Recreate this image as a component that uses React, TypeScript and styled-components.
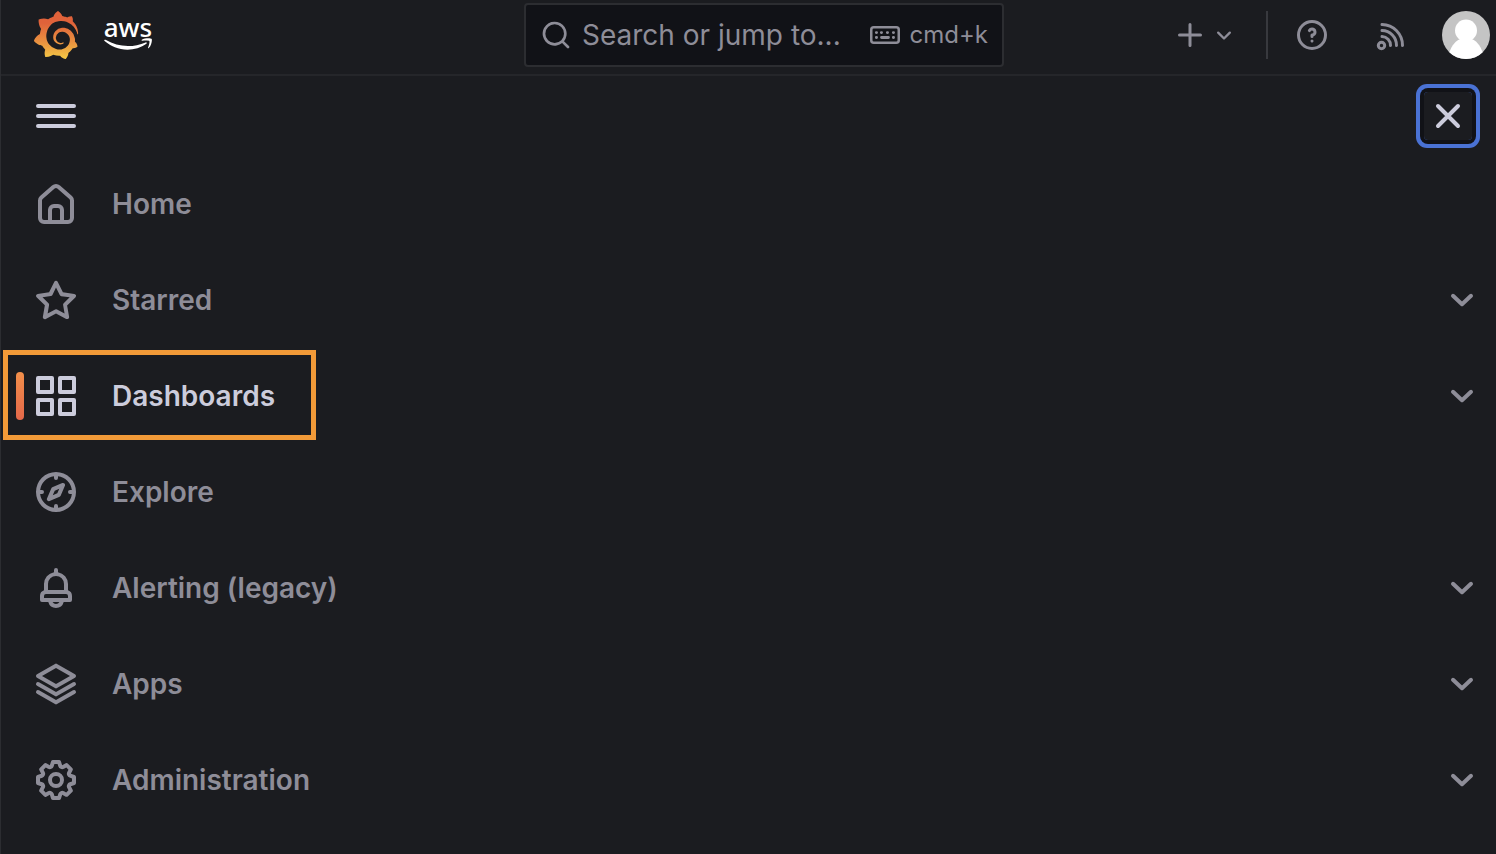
import React from "react";
import styled, { createGlobalStyle, css } from "styled-components";
import { SiGrafana } from "react-icons/si";

const colors = {
  canvas: "#111217",
  panel: "#1b1c20",
  border: "#2c2d31",
  text: "#8e8d98",
  strong: "#ccccdc",
  focus: "#4a72d4",
  marker: "#f29a38",
};

const GlobalStyle = createGlobalStyle`
  *, *::before, *::after { box-sizing: border-box; }
  body {
    margin: 0;
    background: ${colors.panel};
    color: ${colors.text};
    font-family: Inter, "Liberation Sans", sans-serif;
    font-size: 28px;
    line-height: 44px;
  }
  button, input { font: inherit; color: inherit; }
`;

const Page = styled.div`
  min-height: 100vh;
  border-left: 1px solid ${colors.border};
`;

const TopBar = styled.header`
  display: grid;
  grid-template-columns: minmax(0, 1fr) minmax(0, 480px) minmax(0, 1fr);
  align-items: center;
  padding: 3px 0 7px 31px;
  border-bottom: 2px solid #25262a;
`;

const Brand = styled.div`
  display: flex;
  align-items: center;
  gap: 24px;
`;

const LogoLink = styled.a`
  display: flex;
  color: inherit;
  text-decoration: none;
`;

const AwsLogo = styled.a`
  display: flex;
  flex-direction: column;
  align-items: center;
  width: 48px;
  padding-bottom: 4px;
  color: #fff;
  text-decoration: none;
  font-family: "Noto Sans", "Open Sans", sans-serif;
  font-size: 26px;
  font-weight: 500;
  line-height: 22px;
`;

const SearchBox = styled.label`
  display: flex;
  align-items: center;
  height: 64px;
  padding: 0 14px;
  border: 2px solid ${colors.border};
  border-radius: 4px;
  background: ${colors.canvas};
`;

const SearchInput = styled.input`
  flex: 1;
  min-width: 0;
  margin-left: 10px;
  padding: 0;
  border: 0;
  outline: 0;
  background: transparent;
  &::placeholder { color: ${colors.text}; opacity: 1; }
`;

const Shortcut = styled.span`
  display: flex;
  align-items: center;
  gap: 10px;
  font-size: 24px;
`;

const Actions = styled.div`
  display: flex;
  align-items: center;
  justify-content: flex-end;
  padding-right: 6px;
`;

const plainButton = css`
  display: flex;
  align-items: center;
  justify-content: center;
  padding: 0;
  border: 0;
  background: transparent;
  cursor: pointer;
`;

const ActionButton = styled.button<{ $after: number }>`
  ${plainButton}
  gap: 2px;
  margin-right: ${(p) => p.$after}px;
`;

const Divider = styled.span`
  width: 2px;
  height: 48px;
  margin-right: 26px;
  background: #38393e;
`;

const Avatar = styled.svg`
  display: block;
  width: 48px;
  height: 48px;
  border-radius: 50%;
`;

const MenuHeader = styled.div`
  display: flex;
  align-items: center;
  justify-content: space-between;
  padding: 16px 24px 16px 31px;
`;

const MenuButton = styled.button`
  ${plainButton}
  width: 48px;
  height: 48px;
  color: ${colors.strong};
`;

const CloseButton = styled(MenuButton)`
  border-radius: 4px;
  outline: none;
  box-shadow: 0 0 0 4px ${colors.canvas}, 0 0 0 8px ${colors.focus};
`;

const NavList = styled.ul`
  margin: 0;
  padding: 0;
  list-style: none;
`;

const NavItem = styled.li`
  position: relative;
  display: flex;
  align-items: center;
  justify-content: space-between;
  height: 96px;
  padding: 0 10px 0 31px;
`;

const NavLink = styled.a<{ $active?: boolean }>`
  display: flex;
  align-items: center;
  gap: 32px;
  color: ${(p) => (p.$active ? colors.strong : colors.text)};
  font-weight: 600;
  text-decoration: none;
`;

const ActiveBar = styled.span`
  position: absolute;
  left: 15px;
  top: 24px;
  width: 8px;
  height: 48px;
  border-radius: 4px;
  background: linear-gradient(#f28f4a, #e4684a);
`;

const Marker = styled.span`
  position: absolute;
  left: 2px;
  top: 2px;
  width: 313px;
  height: 90px;
  border: 5px solid ${colors.marker};
  pointer-events: none;
`;

const ExpandButton = styled.button`
  ${plainButton}
  width: 48px;
  height: 48px;
`;

const paths = {
  home: "M20,8h0L14,2.74a3,3,0,0,0-4,0L4,8a3,3,0,0,0-1,2.26V19a3,3,0,0,0,3,3H18a3,3,0,0,0,3-3V10.25A3,3,0,0,0,20,8ZM14,20H10V15a1,1,0,0,1,1-1h2a1,1,0,0,1,1,1Zm5-1a1,1,0,0,1-1,1H16V15a3,3,0,0,0-3-3H11a3,3,0,0,0-3,3v5H6a1,1,0,0,1-1-1V10.25a1,1,0,0,1,.34-.75l6-5.25a1,1,0,0,1,1.32,0l6,5.25a1,1,0,0,1,.34.75Z",
  star: "M22,9.67A1,1,0,0,0,21.14,9l-5.69-.83L12.9,3a1,1,0,0,0-1.8,0L8.55,8.16,2.86,9a1,1,0,0,0-.81.68,1,1,0,0,0,.25,1l4.13,4-1,5.68A1,1,0,0,0,6.9,21.44L12,18.77l5.1,2.67a.93.93,0,0,0,.46.12,1,1,0,0,0,.59-.19,1,1,0,0,0,.4-1l-1-5.68,4.13-4A1,1,0,0,0,22,9.67Zm-6.15,4a1,1,0,0,0-.29.88l.72,4.2-3.76-2a1.06,1.06,0,0,0-.94,0l-3.76,2,.72-4.2a1,1,0,0,0-.29-.88l-3-3,4.21-.61a1,1,0,0,0,.76-.55L12,5.7l1.88,3.82a1,1,0,0,0,.76.55l4.21.61Z",
  apps: "M10,13H3a1,1,0,0,0-1,1v7a1,1,0,0,0,1,1h7a1,1,0,0,0,1-1V14A1,1,0,0,0,10,13ZM9,20H4V15H9ZM21,2H14a1,1,0,0,0-1,1v7a1,1,0,0,0,1,1h7a1,1,0,0,0,1-1V3A1,1,0,0,0,21,2ZM20,9H15V4h5Zm1,4H14a1,1,0,0,0-1,1v7a1,1,0,0,0,1,1h7a1,1,0,0,0,1-1V14A1,1,0,0,0,21,13Zm-1,7H15V15h5ZM10,2H3A1,1,0,0,0,2,3v7a1,1,0,0,0,1,1h7a1,1,0,0,0,1-1V3A1,1,0,0,0,10,2ZM9,9H4V4H9Z",
  compass: "M12,2A10,10,0,1,0,22,12,10,10,0,0,0,12,2Zm1,17.93V19a1,1,0,0,0-2,0v.93A8,8,0,0,1,4.07,13H5a1,1,0,0,0,0-2H4.07A8,8,0,0,1,11,4.07V5a1,1,0,0,0,2,0V4.07A8,8,0,0,1,19.93,11H19a1,1,0,0,0,0,2h.93A8,8,0,0,1,13,19.93ZM15.14,7.55l-5,2.12a1,1,0,0,0-.52.52l-2.12,5a1,1,0,0,0,.21,1.1,1,1,0,0,0,.7.29.93.93,0,0,0,.4-.08l5-2.12a1,1,0,0,0,.52-.52l2.12-5a1,1,0,0,0-1.31-1.31Zm-2.49,5.1-2.28,1,1-2.28,2.28-1Z",
  bell: "M18,13.18V10a6,6,0,0,0-5-5.91V3a1,1,0,0,0-2,0V4.09A6,6,0,0,0,6,10v3.18A3,3,0,0,0,4,16v2a1,1,0,0,0,1,1H8.14a4,4,0,0,0,7.72,0H19a1,1,0,0,0,1-1V16A3,3,0,0,0,18,13.18ZM8,10a4,4,0,0,1,8,0v3H8Zm4,10a2,2,0,0,1-1.72-1h3.44A2,2,0,0,1,12,20Zm6-3H6V16a1,1,0,0,1,1-1H17a1,1,0,0,1,1,1Z",
  layers: "M2.5,8.86l9,5.2a1,1,0,0,0,1,0l9-5.2A1,1,0,0,0,22,8a1,1,0,0,0-.5-.87l-9-5.19a1,1,0,0,0-1,0l-9,5.19A1,1,0,0,0,2,8,1,1,0,0,0,2.5,8.86ZM12,4l7,4-7,4L5,8Zm8.5,7.17L12,16,3.5,11.13a1,1,0,0,0-1.37.37,1,1,0,0,0,.37,1.36l9,5.2a1,1,0,0,0,1,0l9-5.2a1,1,0,0,0,.37-1.36A1,1,0,0,0,20.5,11.13Zm0,4L12,20,3.5,15.13a1,1,0,0,0-1.37.37,1,1,0,0,0,.37,1.36l9,5.2a1,1,0,0,0,1,0l9-5.2a1,1,0,0,0,.37-1.36A1,1,0,0,0,20.5,15.13Z",
  cog: "M21.32,9.55l-1.89-.63.89-1.78A1,1,0,0,0,20.13,6L18,3.87a1,1,0,0,0-1.15-.19l-1.78.89-.63-1.89A1,1,0,0,0,13.5,2h-3a1,1,0,0,0-.95.68L8.92,4.57,7.14,3.68A1,1,0,0,0,6,3.87L3.87,6a1,1,0,0,0-.19,1.15l.89,1.78-1.89.63A1,1,0,0,0,2,10.5v3a1,1,0,0,0,.68.95l1.89.63-.89,1.78A1,1,0,0,0,3.87,18L6,20.13a1,1,0,0,0,1.15.19l1.78-.89.63,1.89a1,1,0,0,0,.95.68h3a1,1,0,0,0,.95-.68l.63-1.89,1.78.89A1,1,0,0,0,18,20.13L20.13,18a1,1,0,0,0,.19-1.15l-.89-1.78,1.89-.63A1,1,0,0,0,22,13.5v-3A1,1,0,0,0,21.32,9.55ZM20,12.78l-1.2.4A2,2,0,0,0,17.64,16l.57,1.14-1.1,1.1L16,17.64a2,2,0,0,0-2.79,1.16l-.4,1.2H11.22l-.4-1.2A2,2,0,0,0,8,17.64l-1.14.57-1.1-1.1L6.36,16A2,2,0,0,0,5.2,13.18L4,12.78V11.22l1.2-.4A2,2,0,0,0,6.36,8L5.79,6.89l1.1-1.1L8,6.36A2,2,0,0,0,10.82,5.2l.4-1.2h1.56l.4,1.2A2,2,0,0,0,16,6.36l1.14-.57,1.1,1.1L17.64,8a2,2,0,0,0,1.16,2.79l1.2.4ZM12,8a4,4,0,1,0,4,4A4,4,0,0,0,12,8Zm0,6a2,2,0,1,1,2-2A2,2,0,0,1,12,14Z",
  search: "M21.71,20.29,18,16.61A9,9,0,1,0,16.61,18l3.68,3.68a1,1,0,0,0,1.42,0A1,1,0,0,0,21.71,20.29ZM11,18a7,7,0,1,1,7-7A7,7,0,0,1,11,18Z",
  help: "M11.29,15.29a1.58,1.58,0,0,0-.12.15.76.76,0,0,0-.09.18.64.64,0,0,0-.06.18,1.36,1.36,0,0,0,0,.2.84.84,0,0,0,.08.38.9.9,0,0,0,.54.54.94.94,0,0,0,.76,0,.9.9,0,0,0,.54-.54A1,1,0,0,0,13,16a1,1,0,0,0-.29-.71A1,1,0,0,0,11.29,15.29ZM12,2A10,10,0,1,0,22,12,10,10,0,0,0,12,2Zm0,18a8,8,0,1,1,8-8A8,8,0,0,1,12,20ZM12,7A3,3,0,0,0,9.4,8.5a1,1,0,1,0,1.73,1A1,1,0,0,1,12,9a1,1,0,0,1,0,2,1,1,0,0,0-1,1v1a1,1,0,0,0,2,0v-.18A3,3,0,0,0,12,7Z",
};

type IconName = keyof typeof paths;

function Icon({ name, size }: { name: IconName; size: number }) {
  return (
    <svg width={size} height={size} viewBox="0 0 24 24" fill="currentColor" aria-hidden="true">
      <path d={paths[name]} />
    </svg>
  );
}

function LineIcon({ size, d, weight, box = 24 }: { size: number; d: string; weight: number; box?: number }) {
  return (
    <svg
      width={size}
      height={size}
      viewBox={`0 0 ${box} ${box}`}
      fill="none"
      stroke="currentColor"
      strokeWidth={weight}
      strokeLinecap="round"
      strokeLinejoin="round"
      aria-hidden="true"
    >
      <path d={d} />
    </svg>
  );
}

function KeyboardIcon() {
  return (
    <svg width="30" height="18" viewBox="0 0 30 18" fill="none" stroke="currentColor" strokeLinecap="round" aria-hidden="true">
      <rect x="1.25" y="1.25" width="27.5" height="15.5" rx="2.5" strokeWidth="2.5" />
      <path d="M6.3 6.6h.3M11.3 6.6h.3M17.3 6.6h.3M23.3 6.6h.3M6.3 11.5h.3M11.5 11.5h7M23.3 11.5h.3" strokeWidth="2.8" />
    </svg>
  );
}

const items: { label: string; icon: IconName; expandable?: boolean; active?: boolean }[] = [
  { label: "Home", icon: "home" },
  { label: "Starred", icon: "star", expandable: true },
  { label: "Dashboards", icon: "apps", expandable: true, active: true },
  { label: "Explore", icon: "compass" },
  { label: "Alerting (legacy)", icon: "bell", expandable: true },
  { label: "Apps", icon: "layers", expandable: true },
  { label: "Administration", icon: "cog", expandable: true },
];

export default function App() {
  return (
    <Page>
      <GlobalStyle />
      <TopBar>
        <Brand>
          <LogoLink href="#home" aria-label="Grafana">
            <svg width="0" height="0" aria-hidden="true">
              <defs>
                <linearGradient id="flame" x1="0" y1="0" x2="0" y2="1">
                  <stop offset="0.25" stopColor="#e0623a" />
                  <stop offset="0.65" stopColor="#e99240" />
                  <stop offset="1" stopColor="#f4c945" />
                </linearGradient>
              </defs>
            </svg>
            <SiGrafana size={48} style={{ fill: "url(#flame)" }} />
          </LogoLink>
          <AwsLogo href="#aws">
            aws
            <svg width="48" height="13" viewBox="0 0 48 13" fill="#fff" aria-hidden="true">
              <path d="M.3 2.2C.6 1.6 1.2 1.600 2 2.100 8.500 5.900 16 8 24 8c5.800 0 12-1.200 17.600-3.600 1-.4 1.700.7.8 1.400C37.300 9.700 30 11.700 23.500 11.700 14.600 11.700 6.500 8.300.6 3.100.2 2.800.1 2.500.3 2.200Z" />
              <path d="M37.800 1.700C40.500-.2 46.800-.2 47.600.8c.8 1-.1 6.700-2.900 9.300-.5.4-.9.200-.7-.4.700-1.800 2-5.700 1.300-6.600-.7-.9-4.800-.6-6.900-.4-.7.100-1-.5-.6-1Z" />
            </svg>
          </AwsLogo>
        </Brand>
        <SearchBox>
          <Icon name="search" size={32} />
          <SearchInput type="text" placeholder="Search or jump to..." aria-label="Search or jump to" />
          <Shortcut>
            <KeyboardIcon />
            cmd+k
          </Shortcut>
        </SearchBox>
        <Actions>
          <ActionButton type="button" aria-label="New" $after={28}>
            <LineIcon size={36} weight={2} d="M12 5v14M5 12h14" />
            <LineIcon size={28} weight={2} d="M7 10l5 5 5-5" />
          </ActionButton>
          <Divider />
          <ActionButton type="button" aria-label="Help" $after={42}>
            <Icon name="help" size={36} />
          </ActionButton>
          <ActionButton type="button" aria-label="News" $after={34}>
            <LineIcon
              size={36}
              box={36}
              weight={3}
              d="M6.300 28.500a3.200 3.200 0 1 0 6.400 0a3.200 3.200 0 1 0-6.400 0M10 7.500A20.800 20.800 0 0 1 30.500 28.500M10 13.500A14.800 14.800 0 0 1 24.500 28.500M10 19.500A8.800 8.800 0 0 1 18.500 28.500"
            />
          </ActionButton>
          <ActionButton type="button" aria-label="Profile" $after={0}>
            <Avatar viewBox="0 0 48 48" aria-hidden="true">
              <rect width="48" height="48" fill="#c4c4c4" />
              <circle cx="24" cy="19.500" r="11" fill="#fff" />
              <path d="M7 42C10 34 14 29 19 28h10c5 1 9 6 12 14v6H7Z" fill="#fff" />
            </Avatar>
          </ActionButton>
        </Actions>
      </TopBar>
      <MenuHeader>
        <MenuButton type="button" aria-label="Toggle menu">
          <LineIcon size={48} weight={2} d="M3 7h18M3 12h18M3 17h18" />
        </MenuButton>
        <CloseButton type="button" aria-label="Close menu">
          <LineIcon size={48} weight={2} d="M7 7l10 10M17 7L7 17" />
        </CloseButton>
      </MenuHeader>
      <nav aria-label="Main">
        <NavList>
          {items.map((item) => (
            <NavItem key={item.label}>
              {item.active && <ActiveBar />}
              <NavLink href={`#${item.icon}`} $active={item.active} aria-current={item.active ? "page" : undefined}>
                <Icon name={item.icon} size={48} />
                {item.label}
              </NavLink>
              {item.expandable && (
                <ExpandButton type="button" aria-label={`Expand ${item.label}`}>
                  <LineIcon size={48} weight={2} d="M7.500 9.900l4.500 4.200 4.500-4.200" />
                </ExpandButton>
              )}
              {item.active && <Marker />}
            </NavItem>
          ))}
        </NavList>
      </nav>
    </Page>
  );
}
